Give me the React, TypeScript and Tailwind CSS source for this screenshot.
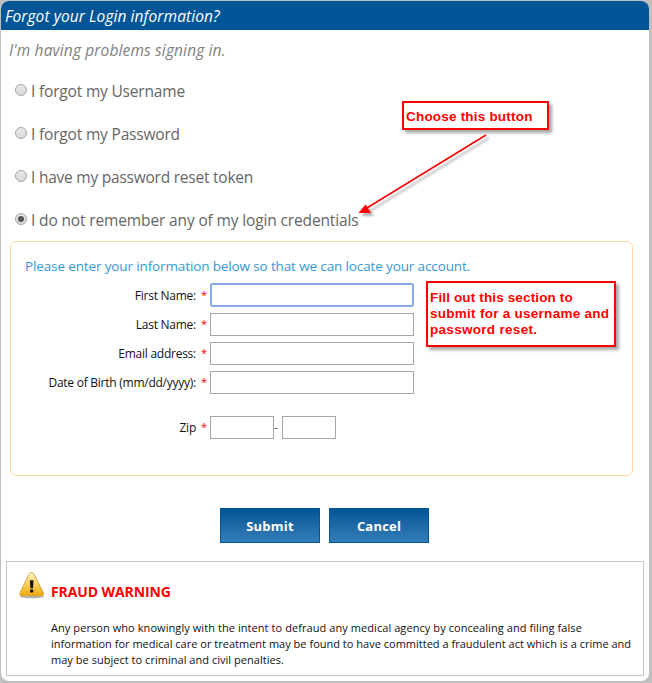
import React from 'react';

const choices = [
  { label: 'I forgot my Username', cls: 'tracking-[-0.18px]' },
  { label: 'I forgot my Password', cls: 'tracking-[-0.18px]' },
  { label: 'I have my password reset token', cls: 'tracking-[-0.23px]' },
  { label: 'I do not remember any of my login credentials', cls: 'tracking-[-0.14px]', checked: true },
];

const fields = [
  { label: 'First Name:', focused: true },
  { label: 'Last Name:' },
  { label: 'Email address:' },
  { label: 'Date of Birth (mm/dd/yyyy):' },
];

function Radio({ checked }: { checked?: boolean }) {
  return (
    <span className="mb-0.5 flex h-3 w-3 shrink-0 items-center justify-center rounded-full border border-[#a5a5a5] bg-linear-to-b from-[#e8e8e8] to-[#d9d9d9]">
      {checked && <span className="h-1.5 w-1.5 rounded-full bg-[#555]" />}
    </span>
  );
}

function Label({ text }: { text: string }) {
  return (
    <div className="flex w-[199px] shrink-0 justify-end text-xs leading-[22px] text-[#111]">
      <span className="whitespace-nowrap tracking-[-0.25px]">{text}</span>
      <span className="ml-[5px] w-[9px] text-[11px] leading-[20px] text-[#f00]">*</span>
    </div>
  );
}

function WarningIcon() {
  return (
    <svg width="28" height="29" viewBox="0 0 28 29">
      <defs>
        <linearGradient id="amber" x1="0" y1="0" x2="0" y2="1">
          <stop offset="0" stopColor="#fff6cd" />
          <stop offset="0.5" stopColor="#fbd45c" />
          <stop offset="1" stopColor="#efa60c" />
        </linearGradient>
      </defs>
      <ellipse cx="14" cy="26.5" rx="12" ry="1.8" fill="#777" opacity="0.55" />
      <path d="M13.500 2.500c-1.300 0-2.100.8-2.700 2.200L2.200 22.500c-.9 2 0 3.300 2 3.300h19c2 0 2.900-1.300 2-3.300L16.200 4.700c-.6-1.400-1.400-2.200-2.700-2.200z" fill="url(#amber)" stroke="#d6a33b" />
      <path d="M11.800 10.300h3.800l-.6 8h-2.600z" fill="#161616" />
      <circle cx="13.700" cy="21" r="1.800" fill="#161616" />
    </svg>
  );
}

export default function App() {
  return (
    <div className="relative h-[683px] w-[652px] overflow-hidden bg-[#c0c0c0] font-['Open_Sans','Noto_Sans',sans-serif]">
      <div className="flex h-[682px] w-[650px] flex-col overflow-hidden rounded-[9px] border border-[#bfbfbf] bg-white">
        <header className="h-[29px] shrink-0 bg-[#005596] pl-1 text-[15.5px] leading-[30px] text-white italic">
          <span className="tracking-[0.08px]">Forgot your Login information?</span>
        </header>
        <p className="h-[39px] shrink-0 pl-2 text-[15.5px] leading-[40px] tracking-[0.13px] text-[#808080] italic">I'm having problems signing in.</p>
        <div className="flex h-[172px] shrink-0 flex-col pl-3.5">
          {choices.map((c) => (
            <label key={c.label} className="flex h-[43px] shrink-0 items-center gap-1 text-[15.5px] text-[#666]">
              <Radio checked={c.checked} />
              <span className={'relative top-px whitespace-nowrap ' + c.cls}>{c.label}</span>
            </label>
          ))}
        </div>
        <section className="ml-[9px] h-[235px] w-[623px] shrink-0 rounded-md border border-[#ffd9a3]">
          <p className="mt-3 ml-3.5 h-6 text-[13.5px] leading-6 tracking-[-0.13px] text-[#3399d5]">Please enter your information below so that we can locate your account.</p>
          <div className="mt-[3px] flex flex-col">
            {fields.map((f) => (
              <div key={f.label} className="flex h-[29px] items-center">
                <Label text={f.label} />
                <input
                  className={f.focused ? 'mb-px h-6 w-[204px] rounded-xs border border-[#86a9e8] outline-none ring-1 ring-inset ring-[#86a9e8]' : 'h-[23px] w-[204px] border border-[#a6a6a6] outline-none'}
                />
              </div>
            ))}
          </div>
          <div className="mt-4 flex h-[29px] items-center">
            <Label text="Zip" />
            <input className="h-[23px] w-16 border border-[#a6a6a6]" />
            <span className="w-2 pr-1 text-center text-xs text-[#555]">-</span>
            <input className="h-[23px] w-[54px] border border-[#a6a6a6]" />
          </div>
        </section>
        <div className="mt-8 ml-[219px] flex shrink-0 gap-[9px]">
          {['Submit', 'Cancel'].map((t) => (
            <button key={t} className="h-[35px] w-[100px] border border-[#005596] bg-linear-to-b from-[#005596] to-[#347db8] pt-0.5 text-[13px] font-bold tracking-[0.2px] text-white">{t}</button>
          ))}
        </div>
        <section className="mt-[18px] ml-[5px] flex h-[115px] w-[638px] shrink-0 border border-[#c6c6c6] pt-2 pl-[11px]">
          <WarningIcon />
          <div className="ml-[5px]">
            <h2 className="mt-[10px] text-[14px] leading-6 font-bold tracking-[-0.1px] whitespace-nowrap text-[#f00]">FRAUD WARNING</h2>
            <p className="mt-4 text-[11px] leading-4 whitespace-nowrap text-[#111]">
              <span className="tracking-[0.07px]">Any person who knowingly with the intent to defraud any medical agency by concealing and filing false</span><br />
              <span className="tracking-[0.01px]">information for medical care or treatment may be found to have committed a fraudulent act which is a crime and</span><br />
              <span className="tracking-[0.03px]">may be subject to criminal and civil penalties.</span>
            </p>
          </div>
        </section>
      </div>

      <div className="absolute top-[101px] left-[402px] h-[29px] w-[147px] border-2 border-[#f00] bg-white pl-0.5 font-['Liberation_Sans',sans-serif] text-[13.5px] leading-[27px] font-bold whitespace-nowrap text-[#f00] shadow-[3px_3px_3px_rgba(0,0,0,0.35)]">
        <span className="tracking-[0.2px]">Choose this button</span>
      </div>
      <div className="absolute top-[281px] left-[426px] h-[66px] w-[190px] border-2 border-[#f00] bg-white pt-[7px] pl-0.5 font-['Liberation_Sans',sans-serif] text-[13.5px] leading-4 font-bold whitespace-nowrap text-[#f00] shadow-[3px_3px_3px_rgba(0,0,0,0.35)]">
        <span className="tracking-[0.14px]">Fill out this section to</span><br />
        <span className="tracking-[0.27px]">submit for a username and</span><br />
        <span className="tracking-[0.3px]">password reset.</span>
      </div>
      <svg className="absolute top-[130px] left-[354px] drop-shadow-[3px_3px_1px_rgba(0,0,0,0.3)]" width="140" height="90" viewBox="354 130 140 90">
        <path d="M486 135L366 208.500" stroke="#f00" strokeWidth="1.500" />
        <path d="M358.500 213L365.500 204.500L371 213z" fill="#f00" />
      </svg>
    </div>
  );
}
